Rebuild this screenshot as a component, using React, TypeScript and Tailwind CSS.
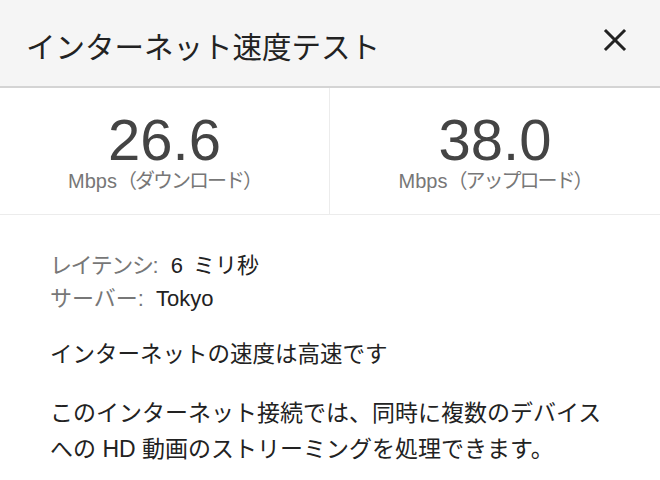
export default function App() {
  const font = { fontFamily: '"Liberation Sans", "Noto Sans CJK JP", sans-serif' };
  return (
    <div className="w-[660px] h-[480px] bg-white overflow-hidden" style={font}>
      {/* Header */}
      <div className="h-[88px] bg-[#f5f5f5] border-b-2 border-[#d4d4d4] flex items-center justify-between pl-[26px] pr-[33px] pt-[10px]">
        <h1 className="text-[29.5px] leading-none text-[#222]">インターネット速度テスト</h1>
        <button className="w-[24px] h-[24px] text-[#222] mt-[-16px]">
          <svg viewBox="0 0 24 24" className="w-[24px] h-[24px]" fill="none" stroke="currentColor" strokeWidth="3" strokeLinecap="square">
            <path d="M3 3 L21 21 M21 3 L3 21" />
          </svg>
        </button>
      </div>

      {/* Stats */}
      <div className="grid grid-cols-2 h-[127px] border-b border-[#ececec]">
        <div className="flex flex-col items-center pt-[24px] border-r border-[#ececec]">
          <div className="text-[58px] leading-[56px] text-[#444]">26.6</div>
          <div className="text-[20px] leading-[24px] text-[#777] mt-[1px]">
            Mbps<span className="tracking-[-2px]">（ダウンロード）</span>
          </div>
        </div>
        <div className="flex flex-col items-center pt-[24px]">
          <div className="text-[58px] leading-[56px] text-[#444]">38.0</div>
          <div className="text-[20px] leading-[24px] text-[#777] mt-[1px]">
            Mbps<span className="tracking-[-2px]">（アップロード）</span>
          </div>
        </div>
      </div>

      {/* Details */}
      <div className="pl-[50px] pt-[34px]">
        <div className="text-[22px] leading-[33px]">
          <div>
            <span className="text-[#777]">
              <span className="tracking-[-1.4px]">レイテンシ</span>:
            </span>
            <span className="text-[#222] ml-[12px]">
              6<span className="ml-[10px]">ミリ秒</span>
            </span>
          </div>
          <div>
            <span className="text-[#777]">サーバー:</span>
            <span className="text-[#222] ml-[12px]">Tokyo</span>
          </div>
        </div>
        <p className="mt-[22px] text-[22.5px] leading-[35px] text-[#222]">インターネットの速度は高速です</p>
        <p className="mt-[23px] text-[23px] leading-[36px] text-[#222]">
          このインターネット接続では、同時に複数のデバイス
          <br />
          への HD 動画のストリーミングを処理できます。
        </p>
      </div>
    </div>
  );
}
